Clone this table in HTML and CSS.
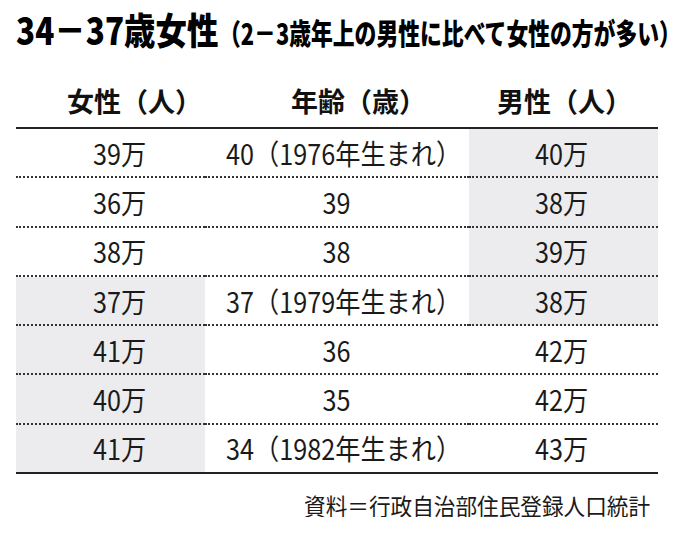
FILE: index.html
```html
<!DOCTYPE html>
<html lang="ja">
<head>
<meta charset="utf-8">
<title>34－37歳女性</title>
<link rel="stylesheet" href="styles.css">
</head>
<body>
<div class="page">
  <h1 class="title"><span class="title-main">34－37歳女性</span><span class="title-sub">（2－3歳年上の男性に比べて女性の方が多い<span class="close">）</span></span></h1>
  <div class="head">
    <div class="hcell h1">女性（人）</div>
    <div class="hcell h2">年齢（歳）</div>
    <div class="hcell h3">男性（人）</div>
  </div>
  <div class="rows">
    <div class="cell c1"><span>39万</span></div>
    <div class="cell c2 note"><span>40（1976年生まれ）</span></div>
    <div class="cell c3 gray"><span>40万</span></div>

    <div class="cell c1"><span>36万</span></div>
    <div class="cell c2"><span>39</span></div>
    <div class="cell c3 gray"><span>38万</span></div>

    <div class="cell c1"><span>38万</span></div>
    <div class="cell c2"><span>38</span></div>
    <div class="cell c3 gray"><span>39万</span></div>

    <div class="cell c1 gray"><span>37万</span></div>
    <div class="cell c2 note"><span>37（1979年生まれ）</span></div>
    <div class="cell c3 gray"><span>38万</span></div>

    <div class="cell c1 gray"><span>41万</span></div>
    <div class="cell c2"><span>36</span></div>
    <div class="cell c3"><span>42万</span></div>

    <div class="cell c1 gray"><span>40万</span></div>
    <div class="cell c2"><span>35</span></div>
    <div class="cell c3"><span>42万</span></div>

    <div class="cell c1 gray last"><span>41万</span></div>
    <div class="cell c2 note last"><span>34（1982年生まれ）</span></div>
    <div class="cell c3 last"><span>43万</span></div>
  </div>
  <div class="source"><span>資料＝行政自治部住民登録人口統計</span></div>
</div>
</body>
</html>
```
FILE: styles.css
```css
html, body {
  margin: 0;
  padding: 0;
  background: #ffffff;
}
body {
  font-family: "Noto Sans CJK JP", "Noto Sans", sans-serif;
  color: #141414;
}
.page {
  width: 675px;
  padding: 11px 0 0 16px;
  box-sizing: border-box;
}
.title {
  display: flex;
  align-items: baseline;
  white-space: nowrap;
  margin: 0;
  font-weight: 900;
  color: #000;
  line-height: 1;
  height: 37px;
}
.title-main {
  display: inline-block;
  flex-shrink: 0;
  font-size: 37px;
  transform: scaleX(0.85);
  transform-origin: 0 50%;
  margin-right: -35px;
}
.title-sub {
  display: inline-block;
  flex-shrink: 0;
  font-size: 29px;
  transform: scaleX(0.752);
  transform-origin: 0 50%;
}
.title-sub .close {
  font-feature-settings: "halt";
}
.head {
  display: grid;
  grid-template-columns: 189px 264px 189px;
  margin-top: 39px;
  height: 40px;
  font-size: 27px;
  font-weight: 700;
  line-height: 1;
  color: #111;
}
.h1 { padding-left: 51px; }
.h2 { padding-left: 86px; }
.h3 { padding-left: 28px; }
.rows {
  display: grid;
  grid-template-columns: 189px 264px 189px;
  grid-auto-rows: 49.3px;
  width: 642px;
  border-top: 2px solid #222;
}
.cell {
  display: flex;
  align-items: center;
  justify-content: center;
  border-bottom: 2px dotted #333;
  font-size: 28px;
  line-height: 1;
  color: #1a1a1a;
}
.cell span {
  display: inline-block;
  transform: scaleX(0.9);
  white-space: nowrap;
}
.c1 { padding-left: 19px; }
.c3 { padding-right: 4px; }
.note { padding-left: 13px; }
.gray { background: #ececee; }
.cell.last { border-bottom: 2px solid #222; }
.source {
  width: 634px;
  text-align: right;
  margin-top: 20px;
  font-size: 23px;
  line-height: 1;
  color: #1a1a1a;
}
.source span {
  display: inline-block;
  transform: scaleX(0.94);
  transform-origin: 100% 50%;
  white-space: nowrap;
}
```
